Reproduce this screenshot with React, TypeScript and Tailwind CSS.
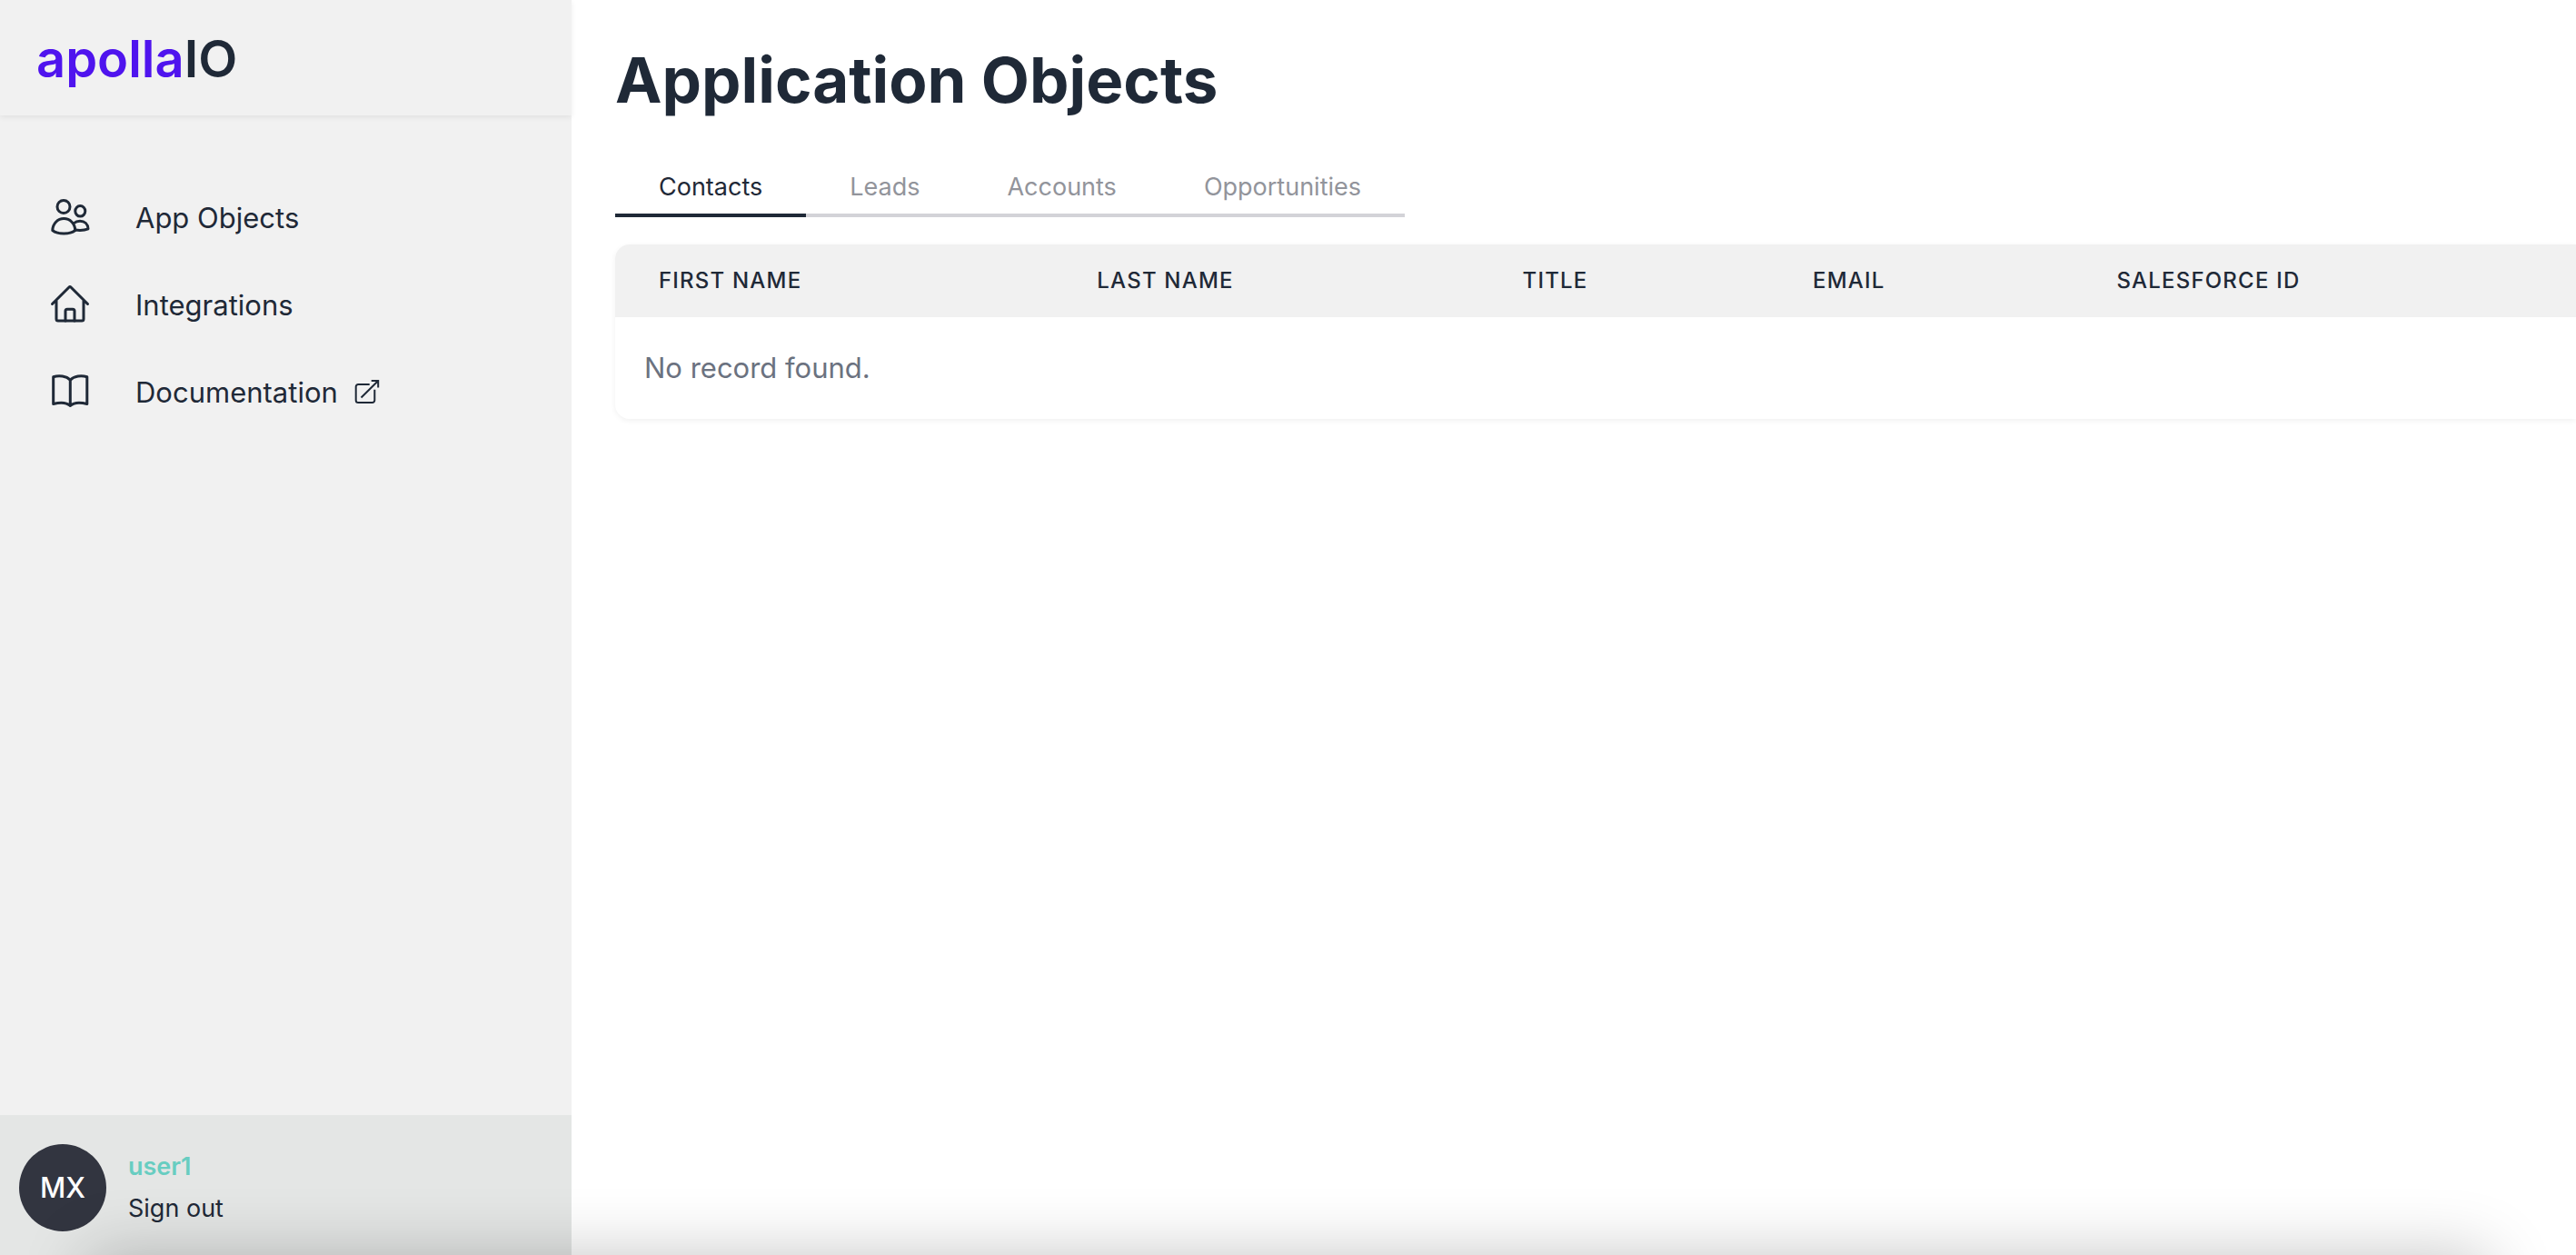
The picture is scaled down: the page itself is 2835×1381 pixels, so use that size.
import type { ReactNode } from "react";

function UsersIcon() {
  return (
    <svg viewBox="0 0 48 48" className="size-12 shrink-0" fill="none" stroke="currentColor" strokeWidth="3" strokeLinejoin="round" strokeLinecap="round" aria-hidden="true">
      <circle cx="17" cy="11.5" r="7" />
      <ellipse cx="35.300" cy="16.300" rx="5.500" ry="5.800" />
      <path d="M4.800 37.500C5 30 10.500 24.500 17.300 24.500S29.500 30 29.800 37.500C26.500 40 22 41 17.300 41S8 40 4.800 37.500Z" />
      <path d="M28.500 29.500C30.300 27.800 32.500 27.200 35 27.200c5.200 0 8.800 3.400 9 8.600-2.500 1.100-5.500 1.600-9 1.600-2 0-3.500-.1-5.200-.4" />
    </svg>
  );
}

function HomeIcon() {
  return (
    <svg viewBox="0 0 48 48" className="size-12 shrink-0" fill="none" stroke="currentColor" strokeWidth="3" strokeLinejoin="round" strokeLinecap="round" aria-hidden="true">
      <path d="M4.500 22.500 22.800 4.300a1.700 1.700 0 0 1 2.400 0L43.500 22.500M9 19v20a2 2 0 0 0 2 2h26a2 2 0 0 0 2-2V19" />
      <path d="M19 41V30.200a2 2 0 0 1 2-2h6a2 2 0 0 1 2 2V41" />
    </svg>
  );
}

function BookIcon() {
  return (
    <svg viewBox="0 0 48 48" className="size-12 shrink-0" fill="none" stroke="currentColor" strokeWidth="3" strokeLinejoin="round" strokeLinecap="round" aria-hidden="true">
      <path d="M24.300 10.200C20 5.800 12 4.800 5.700 6.800v29.700C12 34.800 20 34.500 24.300 38.500c4.200-4 12.200-3.700 18.500-2V6.800C36.500 4.800 28.500 5.800 24.300 10.200ZM24.300 10.200V38.500" />
    </svg>
  );
}

function ExternalIcon() {
  return (
    <svg viewBox="0 0 32 32" className="size-8 shrink-0" fill="none" stroke="currentColor" strokeWidth="2" aria-hidden="true">
      <path d="M18.700 7H6.200A2.500 2.500 0 0 0 3.700 9.500v15A2.500 2.500 0 0 0 6.200 27h15.600a2.500 2.500 0 0 0 2.500-2.500V12.700" />
      <path d="M9.500 21.500 28.200 3M20.700 3h7.500v7.500" />
    </svg>
  );
}

function NavItem({ icon, children }: { icon: ReactNode; children: ReactNode }) {
  return (
    <a href="#" className="flex h-24 items-center gap-12 px-[53px] text-[31px] leading-12">
      {icon}
      <span className="flex items-center gap-4">{children}</span>
    </a>
  );
}

const tabs = ["Contacts", "Leads", "Accounts", "Opportunities"];

const columns = [
  { label: "First name", width: "w-[22.35%]" },
  { label: "Last name", width: "w-[21.7%]" },
  { label: "Title", width: "w-[14.8%]" },
  { label: "Email", width: "w-[15.5%]" },
  { label: "Salesforce ID", width: "w-[25.65%]" },
];

export default function App() {
  return (
    <div className="relative flex min-h-screen overflow-hidden bg-white font-['Inter',sans-serif] text-[#1f2937]">
      <aside className="flex w-[629px] shrink-0 flex-col bg-[#f1f1f1]">
        <div className="flex h-[127px] items-center px-10 pt-0.5 shadow-[0_2px_6px_rgba(0,0,0,0.07)]">
          <a href="#" className="text-[56px] leading-none font-semibold text-[#4f14ee]">
            apolla<span className="text-[#1f2937]">IO</span>
          </a>
        </div>
        <nav className="mt-[65px] flex flex-col" aria-label="Main">
          <NavItem icon={<UsersIcon />}>App Objects</NavItem>
          <NavItem icon={<HomeIcon />}>Integrations</NavItem>
          <NavItem icon={<BookIcon />}>
            Documentation <ExternalIcon />
          </NavItem>
        </nav>
        <div className="mt-auto flex items-center gap-6 bg-[#e4e6e5] px-[21px] pt-8 pb-[26px]">
          <div className="flex size-24 items-center justify-center rounded-full bg-[#323540] text-[31px] font-medium text-white">MX</div>
          <div className="flex flex-col items-start gap-1 text-[27px] leading-[42px]">
            <span className="font-semibold text-[#68cdc1]">user1</span>
            <button type="button">Sign out</button>
          </div>
        </div>
      </aside>

      <main className="min-w-0 flex-1 pl-12">
        <h1 className="mt-12 text-[69px] leading-20 font-bold">Application Objects</h1>
        <div role="tablist" className="mt-12 flex w-fit text-[27px] leading-10">
          {tabs.map((tab, i) => (
            <button
              key={tab}
              type="button"
              role="tab"
              aria-selected={i === 0}
              className="border-b-4 border-[#d3d3d8] px-12 pt-2.5 pb-[9px] text-[#92949b] aria-selected:border-[#1f2937] aria-selected:text-[#1f2937]"
            >
              {tab}
            </button>
          ))}
        </div>
        <div className="mt-[30px] overflow-hidden rounded-l-2xl shadow-[0_2px_6px_rgba(0,0,0,0.06)]">
          <table className="w-full table-fixed text-left">
            <thead className="bg-[#f1f1f1]">
              <tr>
                {columns.map((c) => (
                  <th key={c.label} scope="col" className={`${c.width} h-20 px-12 text-2xl font-medium tracking-wider whitespace-nowrap uppercase`}>
                    {c.label}
                  </th>
                ))}
              </tr>
            </thead>
            <tbody>
              <tr>
                <td colSpan={5} className="h-28 px-8 text-[31px] text-[#6b7280]">
                  No record found.
                </td>
              </tr>
            </tbody>
          </table>
        </div>
      </main>

      <div className="pointer-events-none absolute inset-x-24 top-full h-40 shadow-[0_0_72px_rgba(0,0,0,0.23)]" />
    </div>
  );
}
